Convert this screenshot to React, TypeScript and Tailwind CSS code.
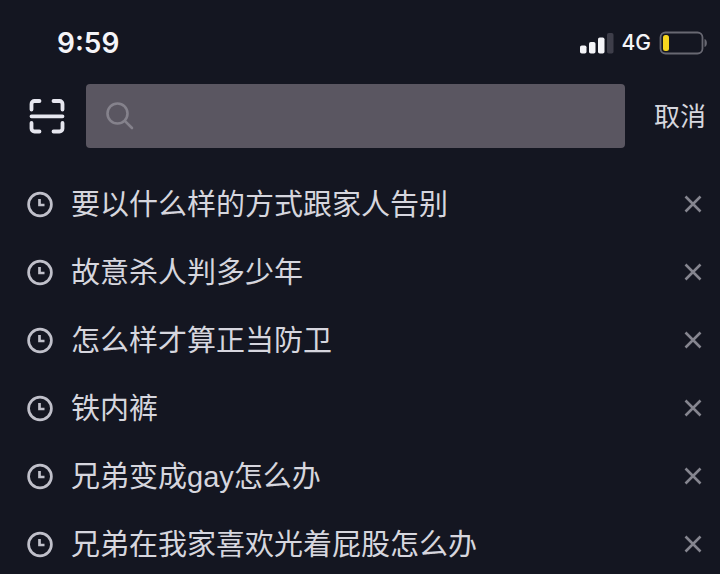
import { useState } from 'react'

const HISTORY = [
  '要以什么样的方式跟家人告别',
  '故意杀人判多少年',
  '怎么样才算正当防卫',
  '铁内裤',
  '兄弟变成gay怎么办',
  '兄弟在我家喜欢光着屁股怎么办'
]

const StatusBar = () => {
  return (
    <div className="flex h-[84px] items-center justify-between pt-[2px] pr-3 pl-[57px] font-['Inter','Liberation_Sans',sans-serif] text-[#f4f4f8]">
      <span className="text-[28px] font-semibold">9:59</span>
      <div className="flex items-center gap-2">
        <svg width="34" height="22" viewBox="0 0 34 22" fill="currentColor" aria-hidden="true">
          <rect x="0" y="13.500" width="6.500" height="8" rx="1.800" />
          <rect x="9" y="10" width="6.500" height="11.500" rx="1.800" />
          <rect x="18" y="5.500" width="6.500" height="16" rx="1.800" />
          <rect x="27" y="1" width="6.500" height="20.500" rx="1.800" fill="#3e3e4a" />
        </svg>
        <span className="text-[21px] font-medium">4G</span>
        <svg width="49" height="24" viewBox="0 0 49 24" aria-hidden="true">
          <rect x="1.500" y="1.500" width="42" height="21" rx="5" fill="none" stroke="#686872" strokeWidth="1.800" />
          <rect x="4" y="4" width="6" height="16" rx="2.500" fill="#f6d51f" />
          <path d="M45.500 8c3.200 1 3.200 7 0 8z" fill="#686872" />
        </svg>
      </div>
    </div>
  )
}

const SearchBar = () => {
  return (
    <form role="search" className="flex items-center pr-[14px] pl-7" onSubmit={(e) => e.preventDefault()}>
      <button type="button" aria-label="扫一扫" className="shrink-0 text-[#e6e6ef]">
        <svg
          width="38"
          height="38"
          viewBox="0 0 38 38"
          fill="none"
          stroke="currentColor"
          strokeWidth="3.800"
          strokeLinecap="round"
          strokeLinejoin="round"
        >
          <path d="M3.500 12.500V7a3 3 0 0 1 3-3H11.500M25.500 4h6a3 3 0 0 1 3 3V12.500M3.500 26v5.500a3 3 0 0 0 3 3H11.500M25.500 34.500h6a3 3 0 0 0 3-3V26M3.500 19.300h31" />
        </svg>
      </button>
      <label className="mr-[29px] ml-5 flex h-16 min-w-0 flex-1 items-center gap-3 rounded bg-[#5a5661] pl-5">
        <svg
          width="28"
          height="28"
          viewBox="0 0 28 28"
          fill="none"
          stroke="#85828c"
          strokeWidth="2.600"
          strokeLinecap="round"
          aria-hidden="true"
        >
          <circle cx="11.500" cy="11.500" r="10" />
          <path d="M18.800 18.800L26 26" />
        </svg>
        <input type="text" aria-label="搜索" className="h-full min-w-0 flex-1 text-2xl text-[#e6e6ef] outline-none" />
      </label>
      <button type="button" className="shrink-0 pt-[3px] text-[26px] text-[#d6d6de]">
        取消
      </button>
    </form>
  )
}

interface HistoryItemProps {
  text: string
  onRemove: () => void
}

const HistoryItem = ({ text, onRemove }: HistoryItemProps) => {
  return (
    <li className="flex h-[68px] items-center pr-[17px] pl-[26px]">
      <svg
        width="28"
        height="28"
        viewBox="0 0 28 28"
        fill="none"
        stroke="#c0c0ca"
        strokeWidth="2.700"
        className="shrink-0"
        aria-hidden="true"
      >
        <circle cx="14" cy="14.500" r="11.400" />
        <path d="M13.500 9v6h5" />
      </svg>
      <a href="#" className="ml-[17px] flex-1 pt-1 text-[29px] whitespace-nowrap text-[#d6d6de]">
        {text}
      </a>
      <button type="button" aria-label={`删除 ${text}`} onClick={onRemove} className="shrink-0">
        <svg width="20" height="20" viewBox="0 0 20 20" fill="none" stroke="#85858f" strokeWidth="2.600">
          <path d="M2.500 2.500l15 15M17.500 2.500l-15 15" />
        </svg>
      </button>
    </li>
  )
}

const App = () => {
  const [history, setHistory] = useState(HISTORY)

  return (
    <main className="min-h-screen bg-[#141621] font-['Liberation_Sans','Noto_Sans_CJK_SC',sans-serif]">
      <StatusBar />
      <SearchBar />
      <ul className="pt-[22px]">
        {history.map((text) => (
          <HistoryItem key={text} text={text} onRemove={() => setHistory(history.filter((item) => item !== text))} />
        ))}
      </ul>
    </main>
  )
}

export default App
